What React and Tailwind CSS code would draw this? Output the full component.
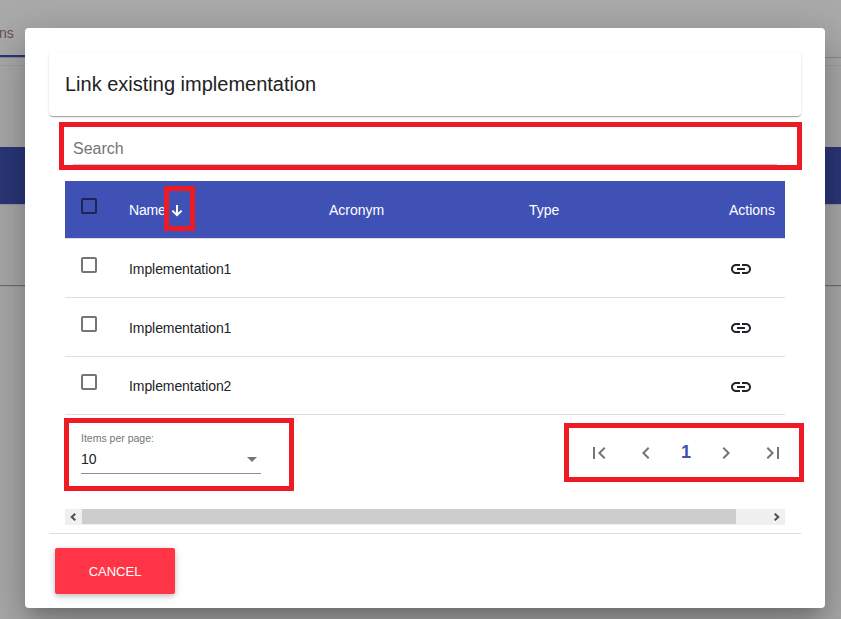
import React from "react";

const rows = [
  { name: "Implementation1", height: "h-[59px]", pad: "pt-[18px]", text: "pt-[20px]", icon: "pt-[18px]" },
  { name: "Implementation1", height: "h-[59px]", pad: "pt-[18px]", text: "pt-[20px]", icon: "pt-[18px]" },
  { name: "Implementation2", height: "h-[58px]", pad: "pt-[17px]", text: "pt-[19px]", icon: "pt-[18px]" },
];

function Icon({ d }) {
  return (
    <svg width="24" height="24" viewBox="0 0 24 24" fill="currentColor" className="block">
      <path d={d} />
    </svg>
  );
}

function PageButton({ label, d }) {
  return (
    <button aria-label={label} className="flex size-10 items-center justify-center text-[#757575]">
      <Icon d={d} />
    </button>
  );
}

// Dimmed page behind the dialog
function Backdrop() {
  return (
    <div className="flex h-full flex-col bg-[#aaaaaa]">
      <div className="relative h-[58px] border-b border-[#8b8b8b]">
        <div className="-ml-px flex h-[57px] w-[50px] items-start border-b-2 border-[#2b3780] pt-[23px] text-sm leading-5 text-[#6b4f52]">
          ns
        </div>
      </div>
      <div className="h-[7px]" />
      <div className="h-[220px] border-t border-[#a0a0a0] shadow-[0_1px_1px_rgba(0,0,0,0.35)]">
        <div className="h-[81px]" />
        <div className="h-[57px] bg-[#2b3779]" />
        <div className="h-px bg-[#979797]" />
      </div>
    </div>
  );
}

function TableHeader() {
  return (
    <div className="flex h-[58px] border-b border-[#dcdee2] bg-[#3f51b5] text-sm leading-5 text-white">
      <div className="w-16 pl-4 pt-[17px]">
        <div className="size-4 rounded-[2px] border-2 border-black/54" />
      </div>
      <div className="flex w-[200px] pt-[19px]">
        <span className="w-[37px] tracking-[-0.2px]">Name</span>
        <svg width="12" height="12" viewBox="0 0 12 12" fill="none" stroke="currentColor" strokeWidth="2" className="ml-[5px] mt-[5px]">
          <path d="M6 0v10M1.400 5.600L6 10.200l4.600-4.600" />
        </svg>
      </div>
      <div className="w-[200px] pt-[19px]">Acronym</div>
      <div className="w-[200px] pt-[19px]">Type</div>
      <div className="pt-[19px]">Actions</div>
    </div>
  );
}

export default function App() {
  return (
    <div className="relative h-[619px] w-full overflow-hidden font-['Liberation_Sans',Arial,sans-serif]">
      <Backdrop />

      <div className="absolute left-[25px] top-7 flex h-[580px] w-[800px] flex-col rounded bg-white pt-6 shadow-[0_11px_15px_-7px_rgba(0,0,0,0.2),0_24px_38px_3px_rgba(0,0,0,0.14),0_9px_46px_8px_rgba(0,0,0,0.12)]">
        <header className="mx-6 flex h-16 shrink-0 items-center rounded px-4 text-xl text-[#212121] shadow-[0_2px_1px_-1px_rgba(0,0,0,0.2),0_1px_1px_0_rgba(0,0,0,0.14),0_1px_3px_0_rgba(0,0,0,0.12)]">
          Link existing implementation
        </header>

        <div className="ml-12 mt-[18px] h-[31px] w-[704px] border-b border-[#c5cad2] pt-px text-base leading-7 text-[#757575]">
          Search
        </div>

        <div className="mx-10 mt-4">
          <TableHeader />
          {rows.map((row, i) => (
            <div key={i} className={`flex border-b border-[#dcdee2] text-sm leading-5 text-[#212529] ${row.height}`}>
              <div className={`w-16 pl-4 ${row.pad}`}>
                <div className="size-4 rounded-[2px] border-2 border-[#757575]" />
              </div>
              <div className={`w-[600px] tracking-[-0.08px] ${row.text}`}>{row.name}</div>
              <div className={row.icon}>
                <Icon d="M3.900 12c0-1.710 1.390-3.100 3.100-3.100h4V7H7c-2.760 0-5 2.240-5 5s2.240 5 5 5h4v-1.900H7c-1.710 0-3.100-1.390-3.100-3.100zM8 13h8v-2H8v2zm9-6h-4v1.900h4c1.710 0 3.100 1.390 3.100 3.100s-1.390 3.100-3.100 3.100h-4V17h4c2.760 0 5-2.240 5-5s-2.240-5-5-5z" />
              </div>
            </div>
          ))}
        </div>

        <div className="ml-14 flex h-[94px] shrink-0 justify-between pr-8">
          <div className="h-[59px] w-[180px] border-b border-[#8f8f8f] pt-4">
            <div className="text-[10.5px] leading-[14px] text-[#757575]">Items per page:</div>
            <div className="flex items-center justify-between pr-1 pt-1 text-sm leading-5 text-[#212121]">
              10
              <svg width="10" height="5" viewBox="0 0 10 5" fill="#757575">
                <path d="M0 0h10L5 5z" />
              </svg>
            </div>
          </div>
          <div className="flex items-start gap-[7px] pt-[18px]">
            <PageButton label="First page" d="M18.410 16.590L13.820 12l4.590-4.590L17 6l-6 6 6 6zM6 6h2v12H6z" />
            <div className="flex">
              <PageButton label="Previous page" d="M15.410 7.410L14 6l-6 6 6 6 1.410-1.410L10.830 12z" />
              <div className="flex h-[38px] w-10 items-center justify-center text-lg font-bold text-[#3f51b5]">1</div>
              <PageButton label="Next page" d="M10 6L8.590 7.410 13.170 12l-4.580 4.590L10 18l6-6z" />
            </div>
            <PageButton label="Last page" d="M5.590 7.410L10.180 12l-4.590 4.590L7 18l6-6-6-6zM16 6h2v12h-2z" />
          </div>
        </div>

        <div className="mx-10 flex h-4 shrink-0 bg-[#f0f0f0] text-[#505050]">
          <div className="flex h-[15px] w-[17px] items-center pl-[5px]">
            <svg width="6" height="8" viewBox="0 0 6 8" fill="none" stroke="currentColor" strokeWidth="2">
              <path d="M5.300 .7L1.700 4l3.600 3.300" />
            </svg>
          </div>
          <div className="h-[15px] w-[654px] bg-[#cdcdcd]" />
          <div className="ml-auto flex h-[15px] w-[17px] items-center justify-end pr-[5px]">
            <svg width="6" height="8" viewBox="0 0 6 8" fill="none" stroke="currentColor" strokeWidth="2">
              <path d="M.7 .7L4.300 4 .7 7.300" />
            </svg>
          </div>
        </div>

        <footer className="mx-6 mt-2 border-t border-[#dcdee2] pl-[6px] pt-[14px]">
          <button className="h-[46px] w-[120px] rounded-[2px] bg-[#ff3547] pt-px text-[13px] text-white shadow-[0_2px_5px_0_rgba(0,0,0,0.16),0_2px_10px_0_rgba(0,0,0,0.12)]">
            CANCEL
          </button>
        </footer>
      </div>

      {/* Red highlight frames over the dialog */}
      <div className="absolute left-[59px] top-[122px] h-12 w-[743px] border-5 border-[#ed1c24]" />
      <div className="absolute left-[164px] top-[186px] h-[45px] w-[31px] border-5 border-[#ed1c24]" />
      <div className="absolute left-[64px] top-[418px] h-[73px] w-[230px] border-5 border-[#ed1c24]" />
      <div className="absolute left-[564px] top-[423px] h-[59px] w-[240px] border-5 border-[#ed1c24]" />
    </div>
  );
}
